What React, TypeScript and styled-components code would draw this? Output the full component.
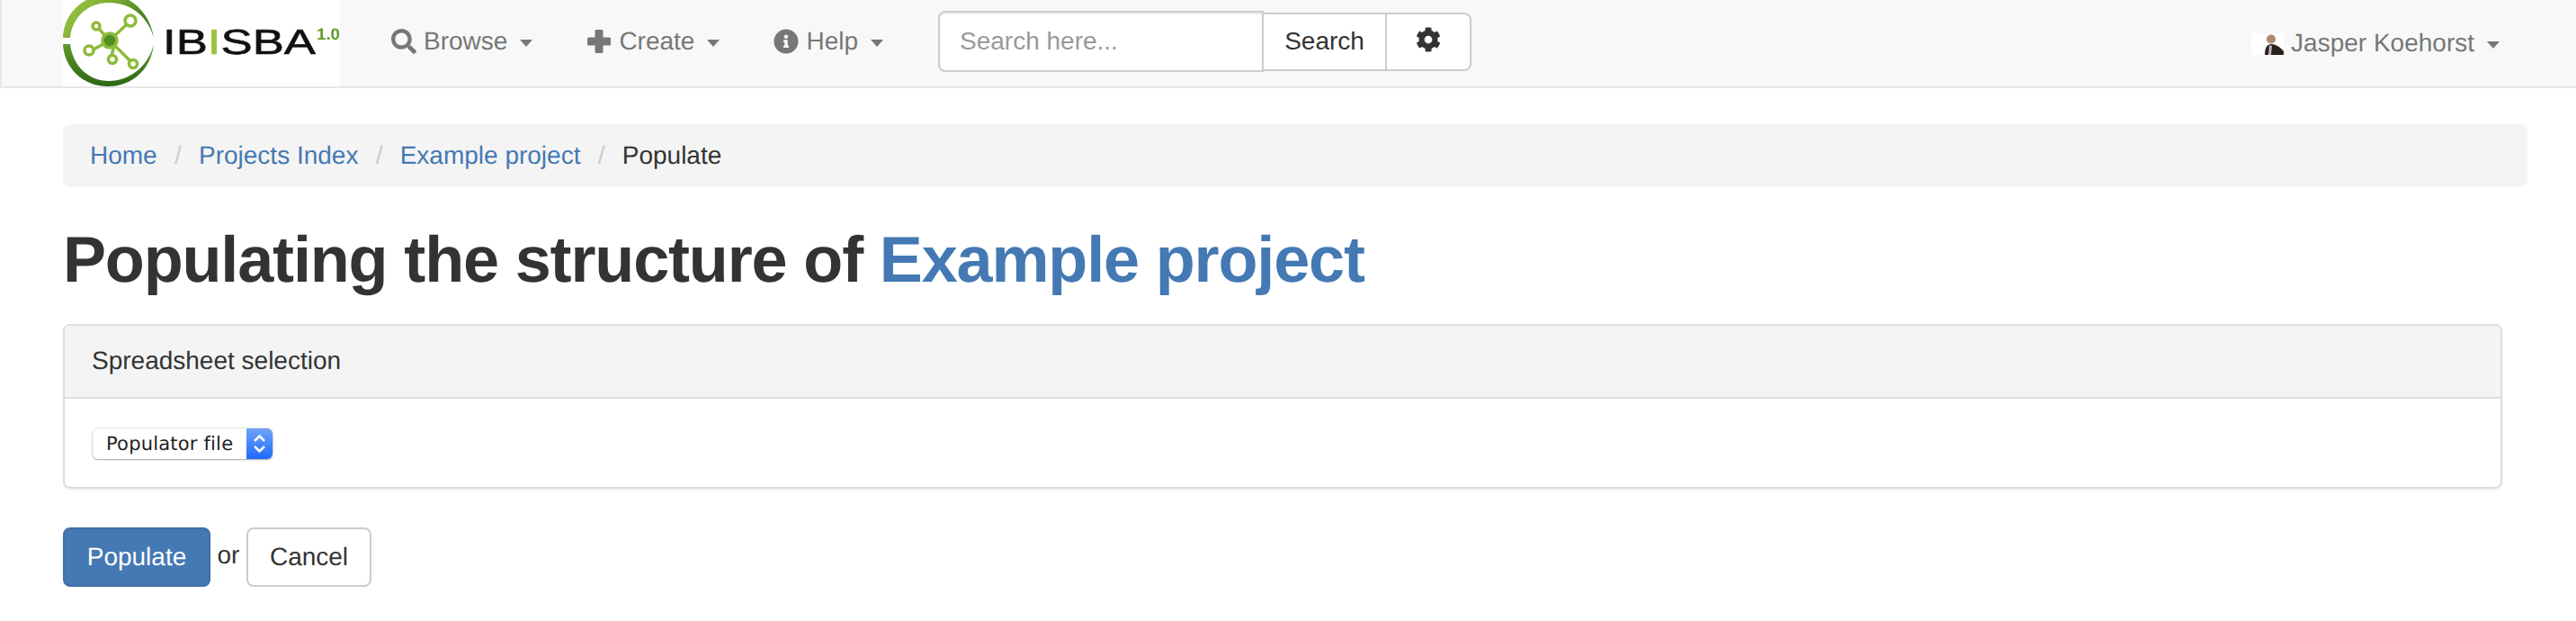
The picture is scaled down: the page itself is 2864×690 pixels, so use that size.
import React from "react"
import styled, { createGlobalStyle } from "styled-components"
import { FaCog, FaInfoCircle, FaSearch } from "react-icons/fa"

const GlobalStyle = createGlobalStyle`
    html, body {
        margin: 0;
        background: #fff;
        color: #333;
        font-family: "Liberation Sans", Arial, sans-serif;
        font-size: 28px;
        text-rendering: geometricPrecision;
    }
`

const Navbar = styled.nav`
    display: flex;
    align-items: center;
    height: 96px;
    padding-left: 70px;
    background: #f8f8f8;
    border-bottom: 2px solid #e7e7e7;
    border-left: 2px solid #e7e7e7;
`

const Logo = styled.svg`
    display: block;
    width: 308px;
    height: 96px;
    margin-left: -2px;
    margin-right: 27px;
    background: #fff;
    filter: blur(0.5px);
`

const NavItem = styled.a`
    display: flex;
    align-items: center;
    padding: 0 30px 4px;
    color: #777;
    line-height: 40px;

    svg {
        margin-right: 8px;
    }
`

const Caret = styled.span`
    display: inline-block;
    width: 0;
    height: 0;
    margin-left: 14px;
    margin-top: 4px;
    border-top: 8px solid #777;
    border-left: 7.5px solid transparent;
    border-right: 7.5px solid transparent;
`

const SearchForm = styled.form`
    display: flex;
    align-items: center;
    margin: 0 0 4px 31px;
`

const SearchInput = styled.input`
    box-sizing: border-box;
    width: 362px;
    height: 68px;
    padding: 0 22px;
    background: #fff;
    border: 2px solid #ccc;
    border-radius: 8px 0 0 8px;
    box-shadow: inset 0 2px 2px rgba(0, 0, 0, 0.07);
    font: inherit;
    color: #333;
    outline: none;

    &::placeholder {
        color: #999;
        opacity: 1;
    }
`

const SearchButton = styled.button`
    box-sizing: border-box;
    display: flex;
    align-items: center;
    justify-content: center;
    width: 137px;
    height: 65px;
    padding: 0;
    background: #fff;
    border: 2px solid #ccc;
    border-left: 0;
    font: inherit;
    color: #333;
`

const GearButton = styled(SearchButton)`
    width: 94px;
    border-radius: 0 8px 8px 0;
    padding-bottom: 4px;
`

const UserMenu = styled.a`
    display: flex;
    align-items: center;
    margin-left: auto;
    margin-right: 85px;
    color: #777;
`

const Avatar = styled.svg`
    display: block;
    width: 36px;
    height: 24px;
    margin-right: 8px;
    margin-top: 2px;
    background: #fff;
    filter: blur(0.5px);
`

const Content = styled.main`
    padding: 40px 54px 0 70px;
`

const Breadcrumb = styled.ol`
    display: flex;
    align-items: center;
    height: 70px;
    margin: 0;
    padding: 0 30px;
    list-style: none;
    background: #f4f4f4;
    border-radius: 8px;
`

const Crumb = styled.li`
    color: #333;

    & + &::before {
        content: "/";
        padding: 0 19.25px;
        color: #ccc;
    }

    a {
        color: #4479b3;
    }
`

const Heading = styled.h1`
    margin: 42px 0 0;
    height: 110px;
    font-size: 72px;
    font-weight: 700;
    line-height: 79px;
    letter-spacing: -1.15px;
    color: #333;

    a {
        color: #4479b3;
    }
`

const Panel = styled.section`
    margin-right: 28px;
    background: #fff;
    border: 2px solid #ddd;
    border-radius: 8px;
    box-shadow: 0 2px 2px rgba(0, 0, 0, 0.05);
`

const PanelHeading = styled.div`
    box-sizing: border-box;
    height: 81px;
    padding: 0 30px;
    line-height: 78px;
    background: #f4f4f4;
    border-bottom: 2px solid #ddd;
    border-radius: 6px 6px 0 0;
`

const PanelBody = styled.div`
    padding: 33px 31px 31px;
`

const FileSelect = styled.div`
    box-sizing: border-box;
    display: flex;
    align-items: center;
    justify-content: space-between;
    width: 200px;
    height: 34px;
    padding-left: 15px;
    background: #fff;
    border-radius: 6px;
    box-shadow: 0 0 0 1px rgba(0, 0, 0, 0.08), 0 1px 2px rgba(0, 0, 0, 0.3);
    font-family: "DejaVu Sans", sans-serif;
    font-size: 21px;
    letter-spacing: 0.2px;
    color: #222;
`

const Stepper = styled.svg`
    display: block;
    width: 29px;
    height: 34px;
    border-radius: 0 6px 6px 0;
    background: linear-gradient(#6ea4f8, #1f69fc);
`

const Actions = styled.div`
    display: flex;
    align-items: center;
    margin-top: 43px;
`

const Button = styled.a<{ $primary?: boolean }>`
    box-sizing: border-box;
    display: flex;
    align-items: center;
    justify-content: center;
    height: 66px;
    border: 2px solid ${(props) => (props.$primary ? "#3f6fa5" : "#ccc")};
    border-radius: 8px;
    background: ${(props) => (props.$primary ? "#4579b3" : "#fff")};
    color: ${(props) => (props.$primary ? "#fff" : "#333")};
`

const PopulateButton = styled(Button)`
    width: 164px;
`

const CancelButton = styled(Button)`
    width: 139px;
`

const Or = styled.span`
    width: 40px;
    text-align: center;
    padding-bottom: 4px;
`

const PlusIcon: React.FC = () => (
    <svg width="28" height="28" viewBox="0 0 28 28">
        <path d="M11 1h6a1.500 1.500 0 0 1 1.500 1.500V9.500h7A1.500 1.500 0 0 1 27 11v6a1.500 1.500 0 0 1-1.500 1.500h-7v7A1.500 1.500 0 0 1 17 27h-6a1.500 1.500 0 0 1-1.500-1.500v-7h-7A1.500 1.500 0 0 1 1 17v-6a1.500 1.500 0 0 1 1.500-1.500h7v-7A1.500 1.500 0 0 1 11 1Z" fill="#777" />
    </svg>
)

const App: React.FC = () => {
    return (
        <>
            <GlobalStyle />
            <Navbar>
                <Logo viewBox="70 0 308 96">
                    <defs>
                        <linearGradient id="ring-top" x1="0" y1="0" x2="1" y2="0.4">
                            <stop offset="0" stopColor="#a4cb4a" />
                            <stop offset="0.5" stopColor="#7fae32" />
                            <stop offset="1" stopColor="#3f7d22" />
                        </linearGradient>
                        <linearGradient id="ring-bottom" x1="0" y1="0" x2="0" y2="1">
                            <stop offset="0" stopColor="#5e9a2c" />
                            <stop offset="1" stopColor="#2c6614" />
                        </linearGradient>
                    </defs>
                    <path d="M70 42C71 12 96-6 120-6c24 0 46 18 51 48-6-22-24-39-50-39C97 3 80 20 78 42Z" fill="url(#ring-top)" />
                    <path d="M70 49h8c3 24 20 41 43 41 24 0 44-17 50-41-3 28-24 47-51 47-28 0-49-21-50-47Z" fill="url(#ring-bottom)" />
                    <g stroke="#8dbb3a" strokeWidth="3.500" fill="#fff">
                        <path d="M122 45 143 25M122 45 109 31M122 45 102 56M122 45 147 70M127 50 124 62" fill="none" />
                        <circle cx="145" cy="23" r="6" />
                        <circle cx="107" cy="29" r="4" />
                        <circle cx="99" cy="56" r="5" />
                        <circle cx="125" cy="66" r="4.500" />
                        <circle cx="148" cy="71" r="4.500" />
                        <circle cx="122" cy="45" r="8" fill="#4f8f25" />
                    </g>
                    <text x="181" y="60" fontFamily="Liberation Sans" fontSize="39" textLength="170" lengthAdjust="spacingAndGlyphs" fill="#111" stroke="#111" strokeWidth="0.600">
                        IB<tspan fill="#9ac33f" stroke="#9ac33f">I</tspan>SBA
                    </text>
                    <text x="352" y="44" fontFamily="Liberation Sans" fontSize="18" fontWeight="700" textLength="26" lengthAdjust="spacingAndGlyphs" fill="#5e9a25">1.0</text>
                </Logo>
                <NavItem><FaSearch size={28} />Browse<Caret /></NavItem>
                <NavItem><PlusIcon />Create<Caret /></NavItem>
                <NavItem><FaInfoCircle size={28} />Help<Caret /></NavItem>
                <SearchForm>
                    <SearchInput placeholder="Search here..." readOnly />
                    <SearchButton type="button">Search</SearchButton>
                    <GearButton type="button"><FaCog size={28} /></GearButton>
                </SearchForm>
                <UserMenu>
                    <Avatar viewBox="0 0 36 24">
                        <circle cx="22" cy="6.500" r="5" fill="#b08a70" />
                        <path d="M15 24c0-7 2-12 7-12s10 3 14 8v4Z" fill="#2a221e" />
                        <path d="M19 24l1-11 3 1-1 10Z" fill="#bfb3c4" />
                    </Avatar>
                    Jasper Koehorst<Caret />
                </UserMenu>
            </Navbar>
            <Content>
                <Breadcrumb>
                    <Crumb><a>Home</a></Crumb>
                    <Crumb><a>Projects Index</a></Crumb>
                    <Crumb><a>Example project</a></Crumb>
                    <Crumb>Populate</Crumb>
                </Breadcrumb>
                <Heading>Populating the structure of <a>Example project</a></Heading>
                <Panel>
                    <PanelHeading>Spreadsheet selection</PanelHeading>
                    <PanelBody>
                        <FileSelect>
                            Populator file
                            <Stepper viewBox="0 0 29 34">
                                <path d="M9 14l5.500-5.500L20 14M9 20l5.500 5.500L20 20" fill="none" stroke="#fff" strokeWidth="2.500" />
                            </Stepper>
                        </FileSelect>
                    </PanelBody>
                </Panel>
                <Actions>
                    <PopulateButton $primary>Populate</PopulateButton>
                    <Or>or</Or>
                    <CancelButton>Cancel</CancelButton>
                </Actions>
            </Content>
        </>
    )
}

export default App
